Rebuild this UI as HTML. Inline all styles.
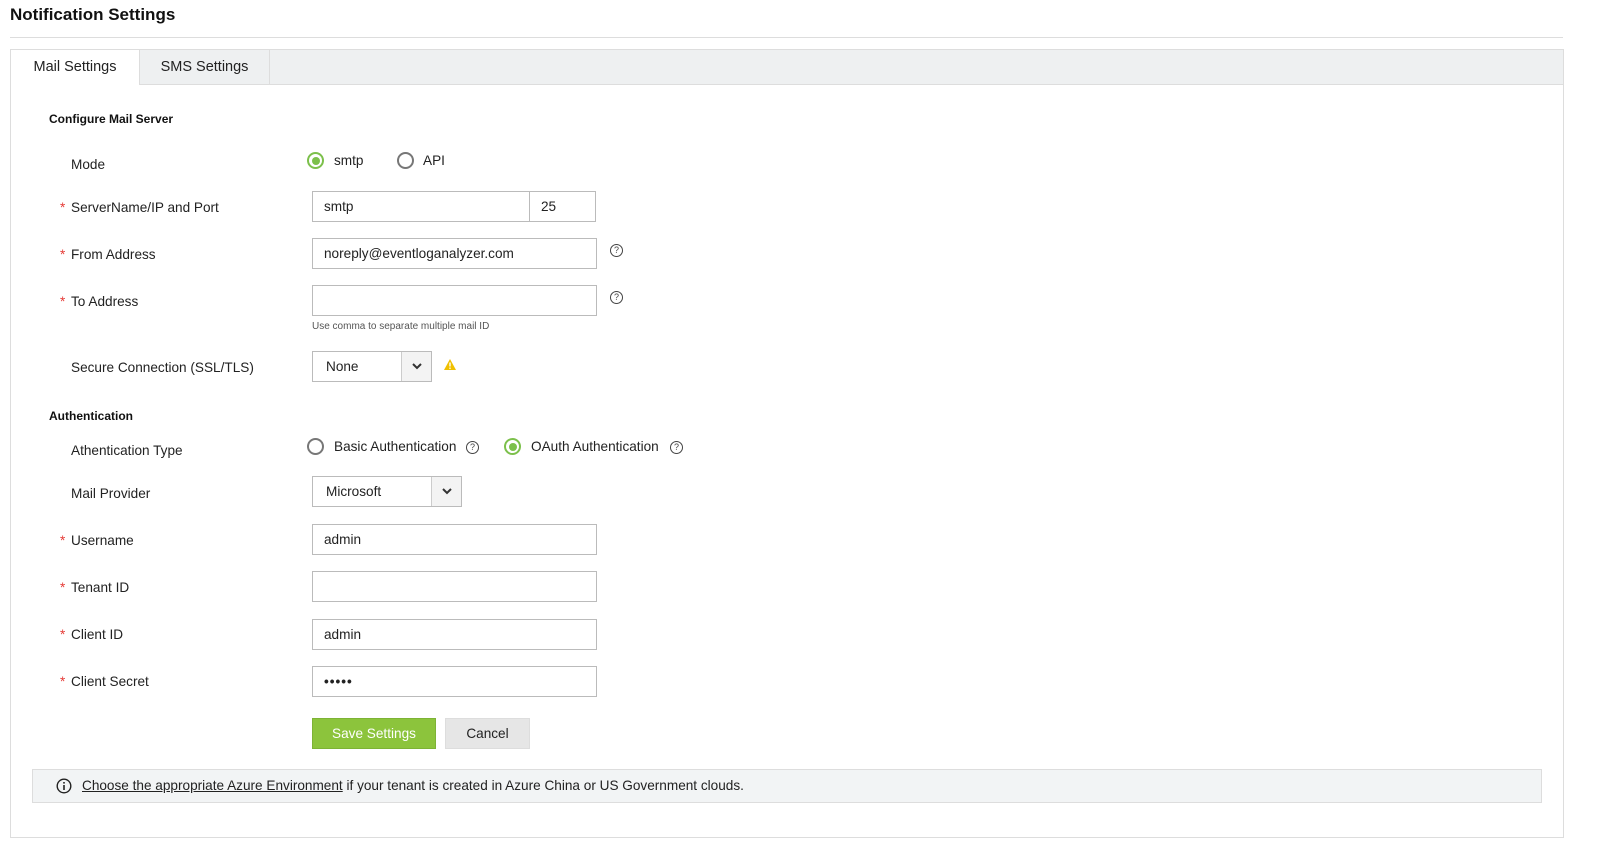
<!DOCTYPE html>
<html><head><style>
*{box-sizing:border-box;margin:0;padding:0}
body{width:1607px;height:866px;background:#fff;font-family:"Liberation Sans",sans-serif;font-size:13.6px;color:#222;position:relative;overflow:hidden}
.a{position:absolute;white-space:nowrap}
.lbl{position:absolute;left:71px;font-size:13.6px;color:#222}
.st{color:#e53935;position:absolute;left:60px}
.in{position:absolute;left:312px;width:285px;height:31px;border:1px solid #bbb;background:#fff;padding:7px 11px;font-size:13.6px}
.rad{position:absolute;width:17px;height:17px;border:2px solid #777;border-radius:50%}
.rad.on{border-color:#7cc04b}
.rad.on::after{content:"";position:absolute;left:2.5px;top:2.5px;width:8px;height:8px;border-radius:50%;background:#7cc04b}
.q{position:absolute;width:13px;height:13px;border:1px solid #444;border-radius:50%;font-size:9px;text-align:center;line-height:11px;color:#444}
.sel{position:absolute;left:312px;height:31px;border:1px solid #bbb;background:#fff;padding:7px 13px;font-size:13.6px}
.sel .ar{position:absolute;right:0;top:0;width:30px;height:29px;border-left:1px solid #ccc;background:#f3f3f3}
.sel .ar svg{position:absolute;left:9px;top:10px}
.h{position:absolute;left:49px;font-weight:bold;font-size:12px;color:#111}
</style></head><body>
<div class="a" style="left:10px;top:5px;font-size:17px;font-weight:bold;color:#111">Notification Settings</div>
<div class="a" style="left:10px;top:37px;width:1553px;height:1px;background:#ddd"></div>
<div class="a" style="left:10px;top:49px;width:1554px;height:789px;border:1px solid #ddd"></div>
<div class="a" style="left:11px;top:50px;width:1552px;height:35px;background:#eef0f1;border-bottom:1px solid #ddd"></div>
<div class="a" style="left:11px;top:50px;width:128px;height:36px;background:#fff;padding-top:9px;text-align:center;font-size:14.5px">Mail Settings</div>
<div class="a" style="left:139px;top:50px;width:131px;height:35px;border-left:1px solid #ddd;border-right:1px solid #ddd;padding-top:9px;text-align:center;font-size:14.5px">SMS Settings</div>

<div class="h" style="top:112px">Configure Mail Server</div>
<div class="lbl" style="top:157px">Mode</div>
<div class="rad on" style="left:307px;top:152px"></div><div class="a" style="left:334px;top:153px">smtp</div>
<div class="rad" style="left:397px;top:152px"></div><div class="a" style="left:423px;top:153px">API</div>

<div class="st" style="top:200px">*</div><div class="lbl" style="top:200px">ServerName/IP and Port</div>
<div class="in" style="top:191px;width:219px">smtp</div>
<div class="in" style="top:191px;left:529px;width:67px">25</div>

<div class="st" style="top:247px">*</div><div class="lbl" style="top:247px">From Address</div>
<div class="in" style="top:238px">noreply@eventloganalyzer.com</div>
<div class="q" style="left:610px;top:244px">?</div>

<div class="st" style="top:294px">*</div><div class="lbl" style="top:294px">To Address</div>
<div class="in" style="top:285px"></div>
<div class="q" style="left:610px;top:291px">?</div>
<div class="a" style="left:312px;top:321px;font-size:10px;color:#555">Use comma to separate multiple mail ID</div>

<div class="lbl" style="top:360px">Secure Connection (SSL/TLS)</div>
<div class="sel" style="top:351px;width:120px">None<div class="ar"><svg width="12" height="9" viewBox="0 0 12 9"><path d="M2 2l4 4 4-4" stroke="#333" stroke-width="2" fill="none"/></svg></div></div>
<svg class="a" style="left:443px;top:358px" width="14" height="13" viewBox="0 0 14 13"><path d="M7 1L13 12H1Z" fill="#f0c000"/><rect x="6.3" y="4.5" width="1.4" height="4" fill="#fff"/><rect x="6.3" y="9.5" width="1.4" height="1.4" fill="#fff"/></svg>

<div class="h" style="top:409px">Authentication</div>
<div class="lbl" style="top:443px">Athentication Type</div>
<div class="rad" style="left:307px;top:438px"></div><div class="a" style="left:334px;top:439px">Basic Authentication</div>
<div class="q" style="left:466px;top:441px">?</div>
<div class="rad on" style="left:504px;top:438px"></div><div class="a" style="left:531px;top:439px">OAuth Authentication</div>
<div class="q" style="left:670px;top:441px">?</div>

<div class="lbl" style="top:486px">Mail Provider</div>
<div class="sel" style="top:476px;width:150px">Microsoft<div class="ar"><svg width="12" height="9" viewBox="0 0 12 9"><path d="M2 2l4 4 4-4" stroke="#333" stroke-width="2" fill="none"/></svg></div></div>

<div class="st" style="top:533px">*</div><div class="lbl" style="top:533px">Username</div>
<div class="in" style="top:524px">admin</div>
<div class="st" style="top:580px">*</div><div class="lbl" style="top:580px">Tenant ID</div>
<div class="in" style="top:571px"></div>
<div class="st" style="top:627px">*</div><div class="lbl" style="top:627px">Client ID</div>
<div class="in" style="top:619px">admin</div>
<div class="st" style="top:674px">*</div><div class="lbl" style="top:674px">Client Secret</div>
<div class="in" style="top:666px;font-weight:bold;letter-spacing:1px">•••••</div>

<div class="a" style="left:312px;top:718px;width:124px;height:31px;background:#8cc43c;border:1px solid #7db335;color:#fff;text-align:center;padding-top:7px">Save Settings</div>
<div class="a" style="left:445px;top:718px;width:85px;height:31px;background:#e6e6e6;border:1px solid #ddd;text-align:center;padding-top:7px">Cancel</div>

<div class="a" style="left:32px;top:769px;width:1510px;height:34px;background:#f2f4f5;border:1px solid #ddd"></div>
<svg class="a" style="left:56px;top:778px" width="16" height="16" viewBox="0 0 16 16"><circle cx="8" cy="8" r="6.8" stroke="#222" stroke-width="1.4" fill="none"/><rect x="7.2" y="7" width="1.6" height="5" fill="#222"/><rect x="7.2" y="4" width="1.6" height="1.6" fill="#222"/></svg>
<div class="a" style="left:82px;top:778px"><span style="text-decoration:underline">Choose the appropriate Azure Environment</span> if your tenant is created in Azure China or US Government clouds.</div>
</body></html>
